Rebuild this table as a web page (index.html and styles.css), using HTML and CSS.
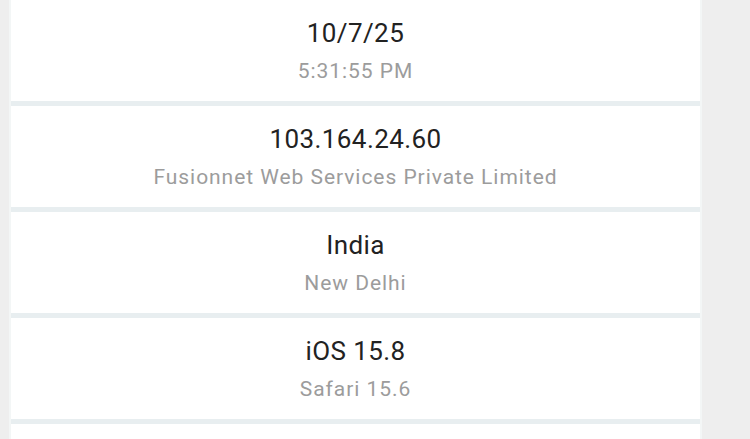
FILE: index.html
```html
<!DOCTYPE html>
<html lang="en">
<head>
  <meta charset="UTF-8">
  <meta name="viewport" content="width=device-width, initial-scale=1.0">
  <title>Visits</title>
  <link rel="stylesheet" href="styles.css">
</head>
<body>
  <div class="visit-list">
    <div class="visit-row">
      <div class="main">10/7/25</div>
      <div class="sub">5:31:55 PM</div>
    </div>
    <div class="visit-row">
      <div class="main">103.164.24.60</div>
      <div class="sub">Fusionnet Web Services Private Limited</div>
    </div>
    <div class="visit-row">
      <div class="main">India</div>
      <div class="sub">New Delhi</div>
    </div>
    <div class="visit-row">
      <div class="main">iOS 15.8</div>
      <div class="sub">Safari 15.6</div>
    </div>
    <div class="visit-row">
      <div class="main">&nbsp;</div>
      <div class="sub">&nbsp;</div>
    </div>
  </div>
</body>
</html>
```

FILE: styles.css
```css
* {
  box-sizing: border-box;
}
body {
  margin: 0;
  padding: 0;
  background: #eeeeee;
  font-family: Roboto, 'Noto Sans', sans-serif;
  overflow: hidden;
}
.visit-list {
  margin-left: 9px;
  width: 693px;
  border-left: 2px solid #f3f6f6;
  border-right: 2px solid #f3f6f6;
  background: #e8eef0;
  display: flex;
  flex-direction: column;
  gap: 5px;
}
.visit-row {
  background: #ffffff;
  height: 101px;
  padding-top: 17px;
  text-align: center;
}
.main {
  font-size: 26px;
  line-height: 32px;
  letter-spacing: 0.4px;
  color: #222222;
}
.sub {
  margin-top: 6px;
  font-size: 21px;
  line-height: 32px;
  letter-spacing: 0.95px;
  color: #9c9c9c;
}
```
